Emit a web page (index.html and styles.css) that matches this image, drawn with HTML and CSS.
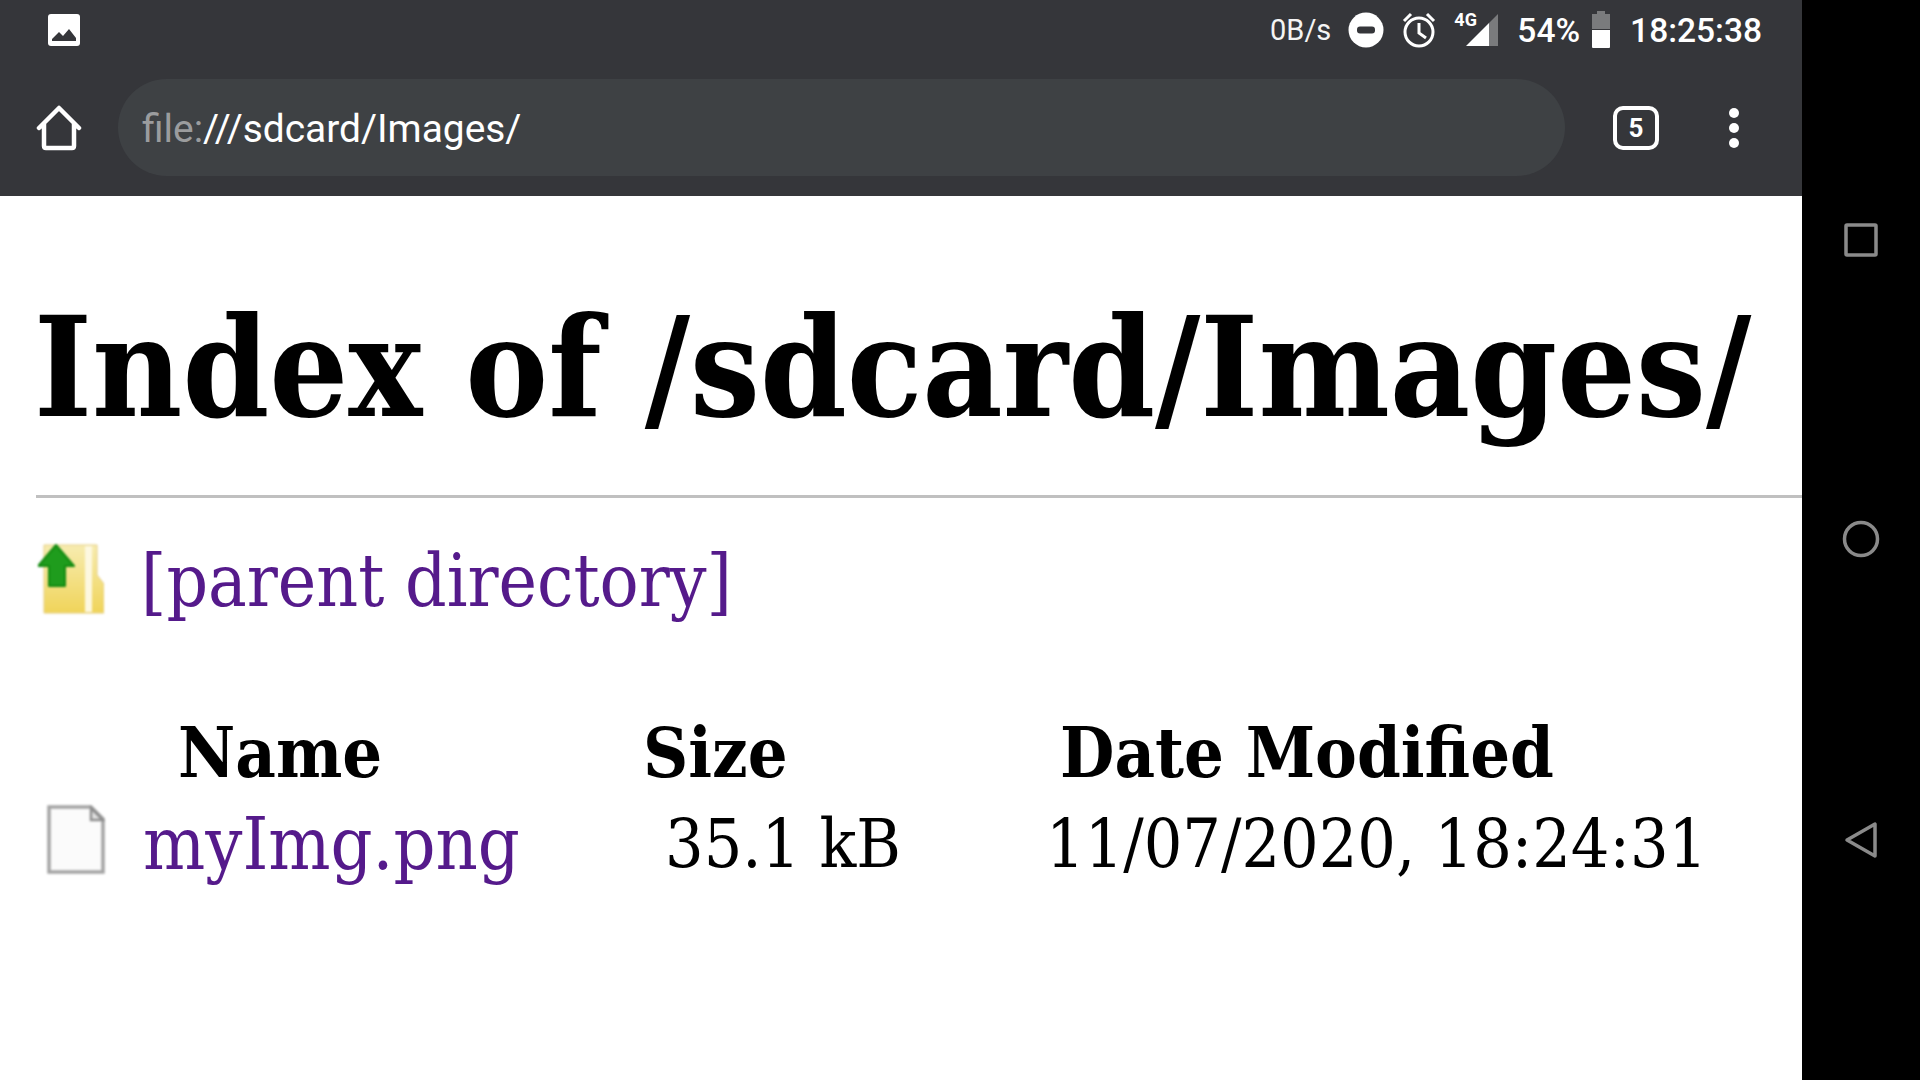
FILE: index.html
```html
<!DOCTYPE html>
<html lang="en">
<head>
    <meta charset="UTF-8">
    <title>Index of /sdcard/Images/</title>
    <link rel="stylesheet" href="styles.css">
</head>
<body>
    <div class="screen">
        <div class="topbar">
            <div class="statusbar">
                <svg class="pic-icon" width="34" height="32" viewBox="0 0 34 32">
                    <rect x="1" y="0" width="32" height="32" rx="3" fill="#fff"/>
                    <path d="M5 27 L5 25 L12 18 L16 22 L22 15 L29 24 L29 27 Z" fill="#35363a"/>
                </svg>
                <div class="status-right">
                    <span class="speed">0B/s</span>
                    <svg width="36" height="36" viewBox="0 0 36 36">
                        <circle cx="18" cy="18" r="17.5" fill="#fff"/>
                        <rect x="9" y="14.5" width="18" height="7" rx="3" fill="#35363a"/>
                    </svg>
                    <svg class="alarm" width="36" height="38" viewBox="0 0 36 38">
                        <circle cx="18" cy="21" r="14" fill="none" stroke="#fff" stroke-width="3"/>
                        <path d="M18 12 V22 L25 27" fill="none" stroke="#fff" stroke-width="3"/>
                        <path d="M3 10 L10 3 M33 10 L26 3" stroke="#fff" stroke-width="3"/>
                    </svg>
                    <div class="signal">
                        <span class="net">4G</span>
                        <svg width="32" height="34" viewBox="0 0 32 34">
                            <path d="M0 33 L23 10 L23 33 Z" fill="#fff"/>
                            <path d="M23 10 L32 1 L32 33 L23 33 Z" fill="#7a7b7d"/>
                        </svg>
                    </div>
                    <span class="battery-text">54%</span>
                    <svg width="20" height="38" viewBox="0 0 20 38">
                        <path d="M6 0 H14 V3 H19 V18 H1 V3 H6 Z" fill="#7a7b7d"/>
                        <path d="M1 19 H19 V36 Q19 37 18 37 H2 Q1 37 1 36 Z" fill="#fff"/>
                    </svg>
                    <span class="clock">18:25:38</span>
                </div>
            </div>
            <div class="toolbar">
                <svg class="home" width="46" height="46" viewBox="0 0 46 46">
                    <path d="M3 23 L23 3 L43 23 M8 19 V41 Q8 43 10 43 H36 Q38 43 38 41 V19" fill="none" stroke="#fff" stroke-width="4.5" stroke-linejoin="round" stroke-linecap="round"/>
                </svg>
                <div class="omnibox"><span class="scheme">file:</span>///sdcard/Images/</div>
                <div class="tabs">5</div>
                <div class="menu"><i></i><i></i><i></i></div>
            </div>
        </div>
        <div class="page">
            <h1>Index of /sdcard/Images/</h1>
            <div class="parent">
                <svg class="folder" width="66" height="70" viewBox="0 0 66 70">
                    <defs>
                        <linearGradient id="folderFill" x1="0" y1="0" x2="0" y2="1">
                            <stop offset="0" stop-color="#f7ecb0"/>
                            <stop offset="1" stop-color="#f0d45a"/>
                        </linearGradient>
                    </defs>
                    <path d="M6 1 H59 V31 L66 40 V69 H6 Z" fill="url(#folderFill)" stroke="#e4cd80" stroke-width="1"/>
                    <path d="M47 2 H54 V68 H47 Z" fill="#fdf8e0"/>
                    <path d="M0 22 L18 1 L36 22 L27 22 L27 42 L11 42 L11 22 Z" fill="#1f9c1d" stroke="#11890f" stroke-width="2" stroke-linejoin="round"/>
                </svg>
                <a href="#">[parent directory]</a>
            </div>
            <div class="listing">
                <div class="head name-head">Name</div>
                <div class="head">Size</div>
                <div class="head date-head">Date Modified</div>
                <div class="cell name-cell">
                    <svg class="file" width="58" height="69" viewBox="0 0 58 69">
                        <path d="M2 2 H44 L56 14 V67 H2 Z" fill="#fbfbfb" stroke="#a4a4a4" stroke-width="3.5"/>
                        <path d="M44 3 V15 H56 Z" fill="#e2e2e2" stroke="#8e8e8e" stroke-width="2.5"/>
                    </svg>
                    <a href="#">myImg.png</a>
                </div>
                <div class="cell size-cell">35.1 kB</div>
                <div class="cell date-cell">11/07/2020, 18:24:31</div>
            </div>
        </div>
    </div>
    <div class="navbar">
        <svg width="34" height="34" viewBox="0 0 34 34"><rect x="2" y="2" width="30" height="30" rx="1" fill="none" stroke="#8a8a8a" stroke-width="3.5"/></svg>
        <svg width="38" height="38" viewBox="0 0 38 38"><circle cx="19" cy="19" r="16.5" fill="none" stroke="#8a8a8a" stroke-width="3.5"/></svg>
        <svg width="34" height="38" viewBox="0 0 34 38"><path d="M31 3 V35 L3 19 Z" fill="none" stroke="#8a8a8a" stroke-width="3.5" stroke-linejoin="round"/></svg>
    </div>
</body>
</html>
```

FILE: styles.css
```css
html, body {
    margin: 0;
    padding: 0;
    height: 100%;
}
body {
    display: flex;
    width: 1920px;
    height: 1080px;
    overflow: hidden;
    background-color: #000;
}
.screen {
    width: 1802px;
    background-color: #fff;
    overflow: hidden;
}
.navbar {
    width: 118px;
    height: 1080px;
    box-sizing: border-box;
    padding: 223px 0 221px;
    display: flex;
    flex-direction: column;
    align-items: center;
    justify-content: space-between;
}
.topbar {
    height: 196px;
    background-color: #35363a;
    color: #fff;
    font-family: Roboto, sans-serif;
}
.statusbar {
    height: 60px;
    display: flex;
    align-items: center;
    justify-content: space-between;
    padding: 0 40px 0 47px;
}
.status-right {
    display: flex;
    align-items: center;
}
.speed {
    font-size: 29px;
    margin-right: 17px;
    color: #f4f4f4;
}
.alarm {
    margin-left: 17px;
}
.signal {
    position: relative;
    display: flex;
    margin-left: 17px;
    padding-left: 12px;
}
.net {
    position: absolute;
    left: 0;
    top: -4px;
    font-size: 18px;
    font-weight: 700;
}
.battery-text {
    font-size: 33.5px;
    font-weight: 500;
    margin-left: 19px;
    margin-right: 11px;
}
.clock {
    font-size: 33.5px;
    font-weight: 500;
    margin-left: 19px;
}
.toolbar {
    height: 136px;
    display: flex;
    align-items: center;
    padding: 0 0 0 36px;
    box-sizing: border-box;
}
.omnibox {
    width: 1447px;
    height: 97px;
    margin-left: 36px;
    margin-bottom: 2px;
    padding-left: 24px;
    box-sizing: border-box;
    line-height: 100px;
    background-color: #3e4144;
    border-radius: 49px;
    font-size: 38.9px;
}
.scheme {
    color: #9b9c9e;
}
.tabs {
    width: 38px;
    height: 36px;
    margin-left: 48px;
    border: 4px solid #fff;
    border-radius: 10px;
    text-align: center;
    line-height: 36px;
    font-size: 26px;
    font-weight: 700;
}
.menu {
    display: flex;
    flex-direction: column;
    gap: 5px;
    margin-left: 70px;
}
.menu i {
    width: 10px;
    height: 10px;
    border-radius: 50%;
    background-color: #fff;
}
.page {
    padding-left: 36px;
    font-family: "DejaVu Serif Condensed", "DejaVu Serif", serif;
    color: #000;
}
h1 {
    margin: 0;
    padding-top: 97px;
    height: 302px;
    box-sizing: border-box;
    font-size: 138px;
    line-height: 150px;
    font-weight: 700;
    white-space: nowrap;
    text-indent: -2px;
    border-bottom: 3px solid #c0c0c0;
}
a {
    color: #551a8b;
    text-decoration: none;
}
.parent {
    display: flex;
    align-items: center;
    margin-top: 38px;
    font-size: 72.3px;
    line-height: 80px;
}
.folder {
    margin-left: 2px;
    filter: blur(0.8px);
}
.parent a {
    margin-left: 37px;
    padding-top: 5px;
}
.listing {
    display: grid;
    grid-template-columns: 607px 403px auto;
    grid-template-rows: 89px 92px;
    align-items: center;
    margin-top: 86px;
    white-space: nowrap;
}
.head {
    font-size: 69.7px;
    font-weight: 700;
    padding-top: 2px;
}
.name-head {
    padding-left: 142px;
}
.date-head {
    padding-left: 14px;
}
.cell {
    font-size: 67.5px;
    padding-top: 2px;
}
.name-cell {
    display: flex;
    align-items: center;
    gap: 38px;
    padding-left: 11px;
    font-size: 73px;
}
.file {
    margin-bottom: 8px;
    filter: blur(0.8px);
}
.size-cell {
    padding-left: 22px;
}
```
